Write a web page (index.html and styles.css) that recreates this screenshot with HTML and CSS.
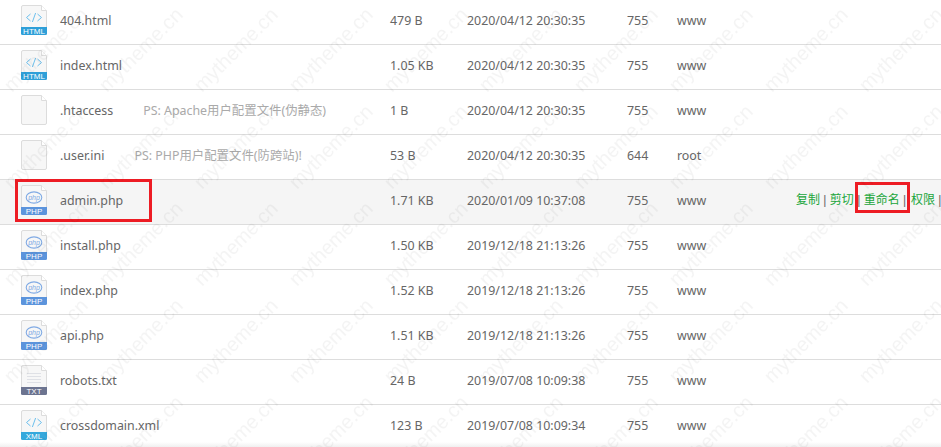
FILE: index.html
```html
<!doctype html>
<html lang="zh-CN">
<head>
<title>文件管理</title>
<meta charset="UTF-8">
<link rel="stylesheet" href="styles.css">
</head>
<body>
<svg class="defs" width="0" height="0">
<symbol id="doc" viewBox="0 0 26 30">
<path d="M2 .5H20.5L25.5 5.5V28A1.5 1.5 0 0 1 24 29.5H2A1.5 1.5 0 0 1 .5 28V2A1.5 1.5 0 0 1 2 .5Z" fill="#f7f7f7" stroke="#dcdcdc"/>
<path d="M20.5 .5V5.5H25.5" fill="#fff" stroke="#dcdcdc"/>
</symbol>
<symbol id="code" viewBox="0 0 26 30">
<path d="M9.500 9L5.500 12.500L9.500 16M16.500 9L20.500 12.500L16.500 16M14.600 8L11.400 17" fill="none" stroke="#6cc0ee" stroke-width="1"/>
</symbol>
<symbol id="elephant" viewBox="0 0 26 30">
<ellipse cx="13" cy="12.500" rx="7.800" ry="5.600" fill="none" stroke="#80aae4" stroke-width="1.100"/>
</symbol>
<symbol id="lines" viewBox="0 0 26 30">
<path d="M6 8.500H20M6 11.500H20M6 14.500H20M6 17.500H20" fill="none" stroke="#dfe1e6"/>
</symbol>
</svg>
<table class="files">
<colgroup><col class="c-icon"><col class="c-name"><col class="c-size"><col class="c-date"><col class="c-perm"><col class="c-owner"><col class="c-ops"></colgroup>
<tr>
<td class="icon"><svg class="ficon" viewBox="0 0 26 30"><use href="#doc"/><use href="#code"/><path class="band-html" d="M0 22H26V28.500A1.500 1.500 0 0 1 24.500 30H1.500A1.500 1.500 0 0 1 0 28.500Z"/><text x="13" y="29" class="band-text">HTML</text></svg></td>
<td>404.html</td><td>479 B</td><td>2020/04/12 20:30:35</td><td>755</td><td>www</td><td></td>
</tr>
<tr>
<td class="icon"><svg class="ficon" viewBox="0 0 26 30"><use href="#doc"/><use href="#code"/><path class="band-html" d="M0 22H26V28.500A1.500 1.500 0 0 1 24.500 30H1.500A1.500 1.500 0 0 1 0 28.500Z"/><text x="13" y="29" class="band-text">HTML</text></svg></td>
<td>index.html</td><td>1.05 KB</td><td>2020/04/12 20:30:35</td><td>755</td><td>www</td><td></td>
</tr>
<tr>
<td class="icon"><svg class="ficon" viewBox="0 0 26 30"><use href="#doc"/></svg></td>
<td>.htaccess<span class="note">PS: Apache用户配置文件(伪静态)</span></td><td>1 B</td><td>2020/04/12 20:30:35</td><td>755</td><td>www</td><td></td>
</tr>
<tr>
<td class="icon"><svg class="ficon" viewBox="0 0 26 30"><use href="#doc"/></svg></td>
<td>.user.ini<span class="note">PS: PHP用户配置文件(防跨站)!</span></td><td>53 B</td><td>2020/04/12 20:30:35</td><td>644</td><td>root</td><td></td>
</tr>
<tr class="hover">
<td class="icon"><svg class="ficon" viewBox="0 0 26 30"><use href="#doc"/><use href="#elephant"/><text x="13" y="14.500" class="php-text">php</text><path class="band-php" d="M0 22H26V28.500A1.500 1.500 0 0 1 24.500 30H1.500A1.500 1.500 0 0 1 0 28.500Z"/><text x="13" y="29" class="band-text">PHP</text></svg></td>
<td>admin.php</td><td>1.71 KB</td><td>2020/01/09 10:37:08</td><td>755</td><td>www</td>
<td class="ops"><a>复制</a> | <a>剪切</a> | <a>重命名</a> | <a>权限</a> |</td>
</tr>
<tr>
<td class="icon"><svg class="ficon" viewBox="0 0 26 30"><use href="#doc"/><use href="#elephant"/><text x="13" y="14.500" class="php-text">php</text><path class="band-php" d="M0 22H26V28.500A1.500 1.500 0 0 1 24.500 30H1.500A1.500 1.500 0 0 1 0 28.500Z"/><text x="13" y="29" class="band-text">PHP</text></svg></td>
<td>install.php</td><td>1.50 KB</td><td>2019/12/18 21:13:26</td><td>755</td><td>www</td><td></td>
</tr>
<tr>
<td class="icon"><svg class="ficon" viewBox="0 0 26 30"><use href="#doc"/><use href="#elephant"/><text x="13" y="14.500" class="php-text">php</text><path class="band-php" d="M0 22H26V28.500A1.500 1.500 0 0 1 24.500 30H1.500A1.500 1.500 0 0 1 0 28.500Z"/><text x="13" y="29" class="band-text">PHP</text></svg></td>
<td>index.php</td><td>1.52 KB</td><td>2019/12/18 21:13:26</td><td>755</td><td>www</td><td></td>
</tr>
<tr>
<td class="icon"><svg class="ficon" viewBox="0 0 26 30"><use href="#doc"/><use href="#elephant"/><text x="13" y="14.500" class="php-text">php</text><path class="band-php" d="M0 22H26V28.500A1.500 1.500 0 0 1 24.500 30H1.500A1.500 1.500 0 0 1 0 28.500Z"/><text x="13" y="29" class="band-text">PHP</text></svg></td>
<td>api.php</td><td>1.51 KB</td><td>2019/12/18 21:13:26</td><td>755</td><td>www</td><td></td>
</tr>
<tr>
<td class="icon"><svg class="ficon" viewBox="0 0 26 30"><use href="#doc"/><use href="#lines"/><path class="band-txt" d="M0 22H26V28.500A1.500 1.500 0 0 1 24.500 30H1.500A1.500 1.500 0 0 1 0 28.500Z"/><text x="13" y="29" class="band-text">TXT</text></svg></td>
<td>robots.txt</td><td>24 B</td><td>2019/07/08 10:09:38</td><td>755</td><td>www</td><td></td>
</tr>
<tr>
<td class="icon"><svg class="ficon" viewBox="0 0 26 30"><use href="#doc"/><use href="#code"/><path class="band-xml" d="M0 22H26V28.500A1.500 1.500 0 0 1 24.500 30H1.500A1.500 1.500 0 0 1 0 28.500Z"/><text x="13" y="29" class="band-text">XML</text></svg></td>
<td>crossdomain.xml</td><td>123 B</td><td>2019/07/08 10:09:34</td><td>755</td><td>www</td><td></td>
</tr>
</table>
<div class="mark mark-name"></div>
<div class="mark mark-ops"></div>
<div class="bottom-fade"></div>
<svg class="watermark" width="941" height="447">
<defs>
<pattern id="wm" x="4" y="4" width="95" height="97" patternUnits="userSpaceOnUse">
<text x="8" y="89" transform="rotate(-45 8 89)">mytheme.cn</text>
</pattern>
</defs>
<rect width="941" height="447" fill="url(#wm)"/>
</svg>
</body>
</html>
```
FILE: styles.css
```css
html, body {margin: 0; height: 100%; overflow: hidden; background: #fff;}
body {position: relative; font-family: "Noto Sans", "Noto Sans CJK SC", sans-serif; font-size: 12.4px; color: #666;}
.defs {position: absolute;}

.files {width: 941px; table-layout: fixed; border-collapse: separate; border-spacing: 0;}
.files td {height: 44px; padding: 0; border-bottom: 1px solid #ddd; white-space: nowrap; vertical-align: top; line-height: 41px;}
.c-icon {width: 60px;}
.c-name {width: 330px;}
.c-size {width: 77px;}
.c-date {width: 160px;}
.c-perm {width: 50px;}
.c-owner {width: 119px;}
.hover td {background: #f5f5f5;}

.files td.icon {padding: 5px 0 0 21px; box-sizing: border-box; height: 45px;}
.ficon {display: block; width: 26px; height: 30px;}
.band-html {fill: #2f9fd8;}
.band-xml {fill: #35a8dc;}
.band-php {fill: #5c94dc;}
.band-txt {fill: #6c7490;}
.band-text {font-family: "Liberation Sans", sans-serif; font-size: 8px; fill: #fff; text-anchor: middle;}
.php-text {font-family: "Liberation Sans", sans-serif; font-size: 7px; font-style: italic; fill: #80aae4; text-anchor: middle;}

.note {margin-left: 30px; color: #aaa;}

.files .ops {font-family: "Liberation Sans", "Noto Sans CJK SC", sans-serif; font-size: 12px;}
.ops a {color: #20a53a;}
.ops a:last-child {margin-left: 1.5px;}

.mark {position: absolute; box-sizing: border-box; border: 3px solid #ed1c24;}
.mark-name {left: 15px; top: 179px; width: 137px; height: 43px;}
.mark-ops {left: 855px; top: 182px; width: 55px; height: 31px;}

.bottom-fade {position: absolute; left: 0; right: 0; bottom: 0; height: 5px; background: linear-gradient(#fff, #f0f0f0);}

.watermark {position: absolute; left: 0; top: 0; pointer-events: none;}
.watermark text {font-family: "Liberation Sans", sans-serif; font-size: 20px; fill: rgba(0, 0, 0, .045);}
```
